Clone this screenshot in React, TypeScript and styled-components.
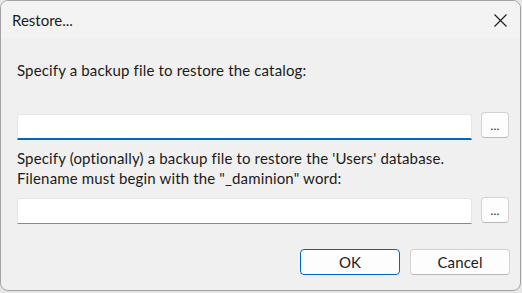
import React from "react";
import styled, { createGlobalStyle } from "styled-components";

const GlobalStyle = createGlobalStyle`
  html, body {
    margin: 0;
    padding: 0;
    background: #e6e6e6;
  }
  body {
    font-family: Lato, "Noto Sans", sans-serif;
    font-size: 15px;
    color: #1b1b1b;
  }
`;

const Window = styled.div`
  box-sizing: border-box;
  width: 521px;
  height: 291px;
  border: 1px solid #a3a3a3;
  border-radius: 8px;
  background: #f0f0f0;
  overflow: hidden;
  display: flex;
  flex-direction: column;
`;

const TitleBar = styled.div`
  height: 37px;
  flex: none;
  background: #f3f3f3;
  display: flex;
  align-items: center;
  justify-content: space-between;
  padding-left: 11px;
`;

const Title = styled.div`
  font-size: 15px;
  line-height: 20px;
  margin-top: 1px;
`;

const CloseButton = styled.div`
  width: 40px;
  height: 37px;
  display: flex;
  align-items: center;
  justify-content: center;
  margin-top: 1px;
`;

const Body = styled.div`
  flex: 1;
  display: flex;
  flex-direction: column;
  padding: 22px 11px 0 16px;
`;

const Label = styled.div<{ $gapAfter: number }>`
  line-height: 20px;
  letter-spacing: 0.15px;
  margin-bottom: ${(p) => p.$gapAfter}px;
`;

const Row = styled.div<{ $gapAfter: number }>`
  display: flex;
  align-items: flex-start;
  gap: 9px;
  height: 26px;
  margin-bottom: ${(p) => p.$gapAfter}px;
`;

const TextInput = styled.div<{ $focused?: boolean }>`
  box-sizing: border-box;
  flex: 1;
  height: 26px;
  margin-top: ${(p) => (p.$focused ? 2 : 1)}px;
  background: #ffffff;
  border: 1px solid #e5e5e5;
  border-bottom: ${(p) => (p.$focused ? "2px solid #0067c0" : "1px solid #8a8a8a")};
  border-radius: 3px 3px 0 0;
`;

const Button = styled.button<{ $primary?: boolean; $width: number }>`
  box-sizing: border-box;
  width: ${(p) => p.$width}px;
  height: 26px;
  padding: 0;
  font-family: inherit;
  font-size: 15px;
  letter-spacing: 0.15px;
  color: #1b1b1b;
  background: #fdfdfd;
  border: 1px solid ${(p) => (p.$primary ? "#0067c0" : "#d3d3d3")};
  border-bottom-color: ${(p) => (p.$primary ? "#0067c0" : "#b8b8b8")};
  border-radius: 4px;
  display: flex;
  align-items: center;
  justify-content: center;
`;

const Dots = styled.span`
  font-size: 12px;
  line-height: 12px;
  margin-top: 2px;
`;

const Footer = styled.div`
  display: flex;
  justify-content: flex-end;
  gap: 10px;
  margin-right: -1px;
`;

export default function App() {
  return (
    <>
      <GlobalStyle />
      <Window>
        <TitleBar>
          <Title>Restore...</Title>
          <CloseButton>
            <svg width="13" height="13" viewBox="0 0 13 13">
              <path d="M0.5 0.5 L12.5 12.5 M12.5 0.5 L0.5 12.5" stroke="#1b1b1b" strokeWidth="1.1" fill="none" />
            </svg>
          </CloseButton>
        </TitleBar>
        <Body>
          <Label $gapAfter={32}>Specify a backup file to restore the catalog:</Label>
          <Row $gapAfter={10}>
            <TextInput $focused />
            <Button $width={28}>
              <Dots>...</Dots>
            </Button>
          </Row>
          <Label $gapAfter={9}>
            Specify (optionally) a backup file to restore the 'Users' database.
            <br />
            Filename must begin with the "_daminion" word:
          </Label>
          <Row $gapAfter={26}>
            <TextInput />
            <Button $width={28}>
              <Dots>...</Dots>
            </Button>
          </Row>
          <Footer>
            <Button $primary $width={100}>OK</Button>
            <Button $width={100}>Cancel</Button>
          </Footer>
        </Body>
      </Window>
    </>
  );
}
